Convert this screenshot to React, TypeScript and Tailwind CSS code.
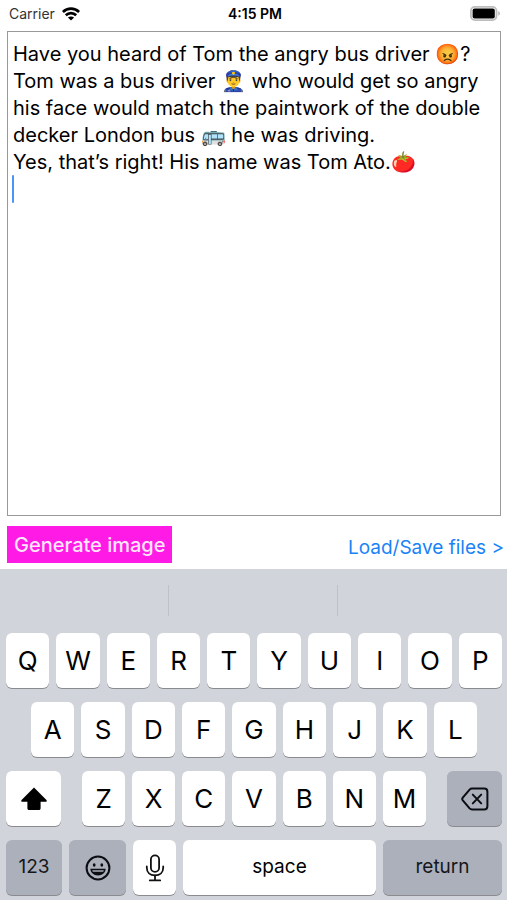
import { useState } from "react";
import type { ReactNode } from "react";
import clsx from "clsx";

const story = `Have you heard of Tom the angry bus driver 😡?
Tom was a bus driver 👮‍♂️ who would get so angry his face would match the paintwork of the double decker London bus 🚌 he was driving.
Yes, that’s right! His name was Tom Ato.🍅
`;

function WifiIcon() {
  return (
    <svg width="18" height="14" viewBox="0 0 18 14" aria-hidden="true">
      <g fill="none" stroke="#000" strokeWidth="2.7">
        <path d="M0.9 5C5.4 0.5 12.6 0.5 17.1 5" />
        <path d="M3.8 8.3C6.7 5.4 11.3 5.4 14.2 8.3" />
      </g>
      <path d="M9 13.6L5.9 10.6C7.6 9 10.4 9 12.1 10.6Z" fill="#000" />
    </svg>
  );
}

function BatteryIcon() {
  return (
    <svg width="31" height="15" viewBox="0 0 31 15" aria-hidden="true">
      <rect x="0.9" y="0.9" width="25.6" height="13.2" rx="4" fill="#fff" stroke="#bdbdbd" strokeWidth="1.8" />
      <rect x="2.6" y="2.6" width="22.2" height="9.8" rx="2" fill="#000" />
      <path d="M28.2 5.2C30.6 5.9 30.6 8.9 28.2 9.6Z" fill="#bdbdbd" />
    </svg>
  );
}

function StatusBar() {
  return (
    <header className="grid h-[27px] grid-cols-3 items-center pl-[9px] pr-[6px] text-[14px] text-[#333]">
      <div className="flex items-center gap-[7px]">
        <span>Carrier</span>
        <WifiIcon />
      </div>
      <span className="text-center font-semibold text-black">4:15 PM</span>
      <div className="flex justify-end">
        <BatteryIcon />
      </div>
    </header>
  );
}

function ShiftIcon() {
  return (
    <svg width="26" height="24" viewBox="0 0 26 24" aria-hidden="true">
      <path
        d="M13 0.6L25.2 12.8C26.2 13.9 25.7 14.8 24.6 14.8H19.6V21C19.6 22.4 19 23 17.6 23H8.4C7 23 6.4 22.4 6.4 21V14.8H1.4C0.3 14.8 -0.2 13.9 0.8 12.8Z"
        fill="#000"
      />
    </svg>
  );
}

function DeleteIcon() {
  return (
    <svg width="28" height="24" viewBox="0 0 28 24" fill="none" stroke="#0b0d12" strokeWidth="2" aria-hidden="true">
      <path
        d="M11 1.6H23.2C25.2 1.6 26.4 2.8 26.4 4.8V19.2C26.4 21.2 25.2 22.4 23.2 22.4H11C10 22.4 9.2 22 8.6 21.4L1.8 13.4C1 12.4 1 11.6 1.8 10.6L8.6 2.6C9.2 2 10 1.6 11 1.6Z"
        strokeLinejoin="round"
      />
      <path d="M11.8 7.6L20.2 16.4M20.2 7.6L11.8 16.4" strokeLinecap="round" />
    </svg>
  );
}

function SmileIcon() {
  return (
    <svg width="26" height="26" viewBox="0 0 26 26" aria-hidden="true">
      <circle cx="13" cy="13" r="11.4" fill="none" stroke="#0b0d12" strokeWidth="2" />
      <ellipse cx="9.2" cy="10" rx="1.4" ry="1.7" fill="#0b0d12" />
      <ellipse cx="16.8" cy="10" rx="1.4" ry="1.7" fill="#0b0d12" />
      <path d="M5.4 13.8H20.6C20.6 17.8 17.4 20.4 13 20.4S5.4 17.8 5.4 13.8Z" fill="#0b0d12" />
      <path d="M7.2 15.2H18.8L18.2 16.8H7.8Z" fill="#aab0bb" />
    </svg>
  );
}

function MicIcon() {
  return (
    <svg width="20" height="28" viewBox="0 0 20 28" fill="none" stroke="#111" strokeWidth="1.8" strokeLinecap="round" aria-hidden="true">
      <rect x="5.9" y="1.4" width="8.2" height="16.4" rx="4.1" />
      <path d="M1.8 12.4V13.8C1.8 18.4 5 21.4 10 21.4S18.2 18.4 18.2 13.8V12.4" />
      <path d="M10 21.4V26.4M4.8 26.4H15.2" />
    </svg>
  );
}

type KeyProps = {
  label: string;
  dark?: boolean;
  className?: string;
  onPress?: () => void;
  children?: ReactNode;
};

function Key({ label, dark, className, onPress, children }: KeyProps) {
  return (
    <button
      type="button"
      aria-label={label}
      onClick={onPress}
      className={clsx(
        "flex h-[55px] items-center justify-center rounded-[6px] shadow-[0_1px_0_#898b8f]",
        dark ? "bg-[#abb0bb] text-[#15171c]" : "bg-white text-black",
        className
      )}
    >
      {children ?? label}
    </button>
  );
}

function Letters({ keys, onType }: { keys: string; onType: (s: string) => void }) {
  return (
    <div className="flex flex-1 gap-[7px]">
      {keys.split("").map((k) => (
        <Key key={k} label={k} className="flex-1 text-[26px]" onPress={() => onType(k)} />
      ))}
    </div>
  );
}

function Keyboard({ onType, onDelete }: { onType: (s: string) => void; onDelete: () => void }) {
  return (
    <section aria-label="Keyboard" className="bg-[#d1d4da] pb-[5px]">
      <div className="grid h-[64px] grid-cols-3 divide-x divide-[#bfc1c6] pb-[17px] pt-[16px]">
        <div />
        <div />
        <div />
      </div>
      <div className="flex flex-col gap-[14px] pl-[6px] pr-[5px]">
        <div className="flex">
          <Letters keys="QWERTYUIOP" onType={onType} />
        </div>
        <div className="flex px-[25px]">
          <Letters keys="ASDFGHJKL" onType={onType} />
        </div>
        <div className="flex gap-[21px]">
          <Key label="shift" className="w-[55px]">
            <ShiftIcon />
          </Key>
          <Letters keys="ZXCVBNM" onType={onType} />
          <Key label="delete" dark className="w-[55px]" onPress={onDelete}>
            <DeleteIcon />
          </Key>
        </div>
        <div className="flex gap-[7px]">
          <Key label="123" dark className="w-[56px] text-[19px]" />
          <Key label="emoji" dark className="w-[57px]">
            <SmileIcon />
          </Key>
          <Key label="dictate" className="w-[43px]">
            <MicIcon />
          </Key>
          <Key label="space" className="flex-1 text-[19px]" onPress={() => onType(" ")} />
          <Key label="return" dark className="w-[119px] text-[19px]" onPress={() => onType("\n")} />
        </div>
      </div>
    </section>
  );
}

export default function App() {
  const [text, setText] = useState(story);

  return (
    <div className="flex min-h-screen flex-col bg-white font-['Inter','Noto_Sans',sans-serif]">
      <StatusBar />
      <main className="flex flex-1 flex-col pl-[7px] pr-[6px] pt-[4px]">
        <div className="relative flex flex-1">
          <textarea
            aria-label="Story"
            value={text}
            onChange={(e) => setText(e.target.value)}
            className="w-full resize-none border border-[#999] px-[5px] pt-[9px] text-[20px] leading-[27px] text-black outline-none"
          />
          <span className="absolute left-[5px] top-[144px] h-[28px] w-[2px] rounded bg-[#4d94f7]" />
        </div>
        <div className="flex items-center justify-between pb-[6px] pt-[10px]">
          <button type="button" className="h-[37px] bg-[#ff1ae6] px-[7px] text-[20px] font-medium text-[#ffe6fb]">
            Generate image
          </button>
          <a href="#files" className="-mr-[3px] pt-[7px] text-[19px] text-[#1a82f7]">
            Load/Save files &gt;
          </a>
        </div>
      </main>
      <Keyboard onType={(s) => setText(text + s)} onDelete={() => setText(text.slice(0, -1))} />
    </div>
  );
}
